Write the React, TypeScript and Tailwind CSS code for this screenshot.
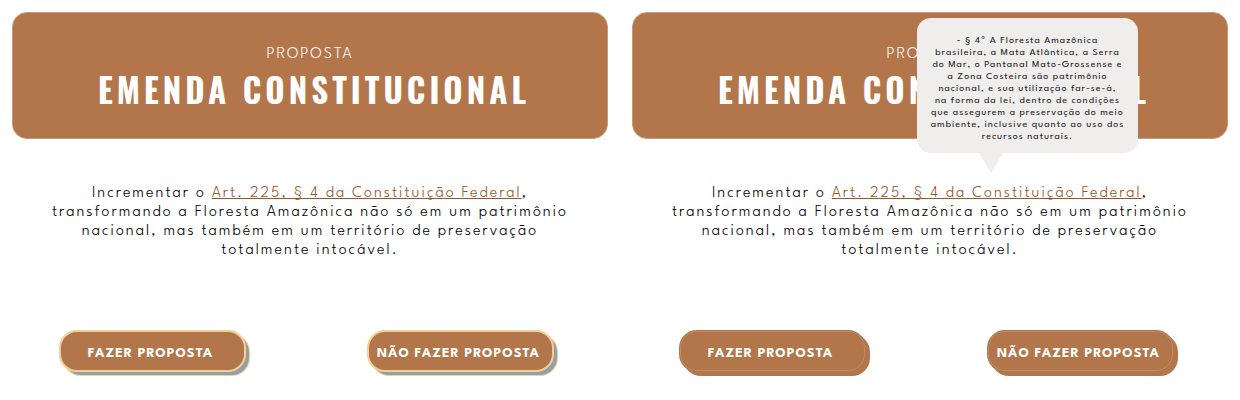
const plainButton = "border-[#f1cf93] shadow-[4px_4px_0_-1px_#92a0ad,4px_4px_0_0_#f1cf93]";
const activeButton =
  "border-[#b2764a] outline outline-1 -outline-offset-2 outline-[#c18a62] shadow-[4px_4px_0_0_#b2764a]";

function Choice({ label, active }: { label: string; active: boolean }) {
  return (
    <button
      type="button"
      className={`h-[42px] w-[187px] shrink-0 cursor-pointer whitespace-nowrap rounded-[18px] border-2 bg-[#b2764a] pt-1 pr-1 text-[14px] font-bold tracking-[1px] text-white ${
        active ? activeButton : plainButton
      }`}
    >
      {label}
    </button>
  );
}

function Tooltip() {
  return (
    <div
      id="artigo"
      role="tooltip"
      className="absolute top-[18px] left-[297px] w-[221px] rounded-[14px] bg-[#efeeec] pt-[17px] pb-[10px] text-center text-[10px] leading-[12px] tracking-[1px] text-[#222222]"
    >
      <p className="whitespace-nowrap">
        - § 4º A Floresta Amazônica
        <br />
        brasileira, a Mata Atlântica, a Serra
        <br />
        do Mar, o Pantanal Mato-Grossense e
        <br />
        a Zona Costeira são patrimônio
        <br />
        nacional, e sua utilização far-se-á,
        <br />
        na forma da lei, dentro de condições
        <br />
        que assegurem a preservação do meio
        <br />
        ambiente, inclusive quanto ao uso dos
        <br />
        recursos naturais.
      </p>
      <span className="absolute top-full left-[62px] h-5 w-6 bg-[#efeeec] [clip-path:polygon(0_0,100%_0,50%_100%)]" />
    </div>
  );
}

function Proposal({ active = false }: { active?: boolean }) {
  return (
    <section className="relative px-3 pt-3 pb-6">
      <header className="flex h-[127px] flex-col items-center rounded-[15px] border border-[#c79a78] bg-[#b2764a] pt-[30px] text-white">
        <p className="text-[16px] leading-6 font-light tracking-[2px]">PROPOSTA</p>
        <h1 className="whitespace-nowrap pl-2 font-['Oswald','Roboto_Condensed',sans-serif] text-[33px] leading-[46px] font-bold tracking-[4px]">
          EMENDA CONSTITUCIONAL
        </h1>
      </header>
      <p className="mt-[45px] whitespace-nowrap text-center text-[16px] leading-[19px] font-[350] tracking-[2px] text-black">
        Incrementar o{" "}
        <a
          href="#artigo"
          className="text-[#9c5426] underline decoration-1 underline-offset-1 [text-decoration-skip-ink:none]"
        >
          Art. 225, § 4 da Constituição Federal
        </a>
        ,<br />
        transformando a Floresta Amazônica não só em um patrimônio
        <br />
        nacional, mas também em um território de preservação
        <br />
        totalmente intocável.
      </p>
      <div className="mt-[70px] flex justify-between pr-[54px] pl-[47px]">
        <Choice label="FAZER PROPOSTA" active={active} />
        <Choice label="NÃO FAZER PROPOSTA" active={active} />
      </div>
      {active && <Tooltip />}
    </section>
  );
}

export default function App() {
  return (
    <main className="grid min-h-screen grid-cols-2 bg-white font-['League_Spartan','Outfit','Inter',sans-serif]">
      <Proposal />
      <Proposal active />
    </main>
  );
}
